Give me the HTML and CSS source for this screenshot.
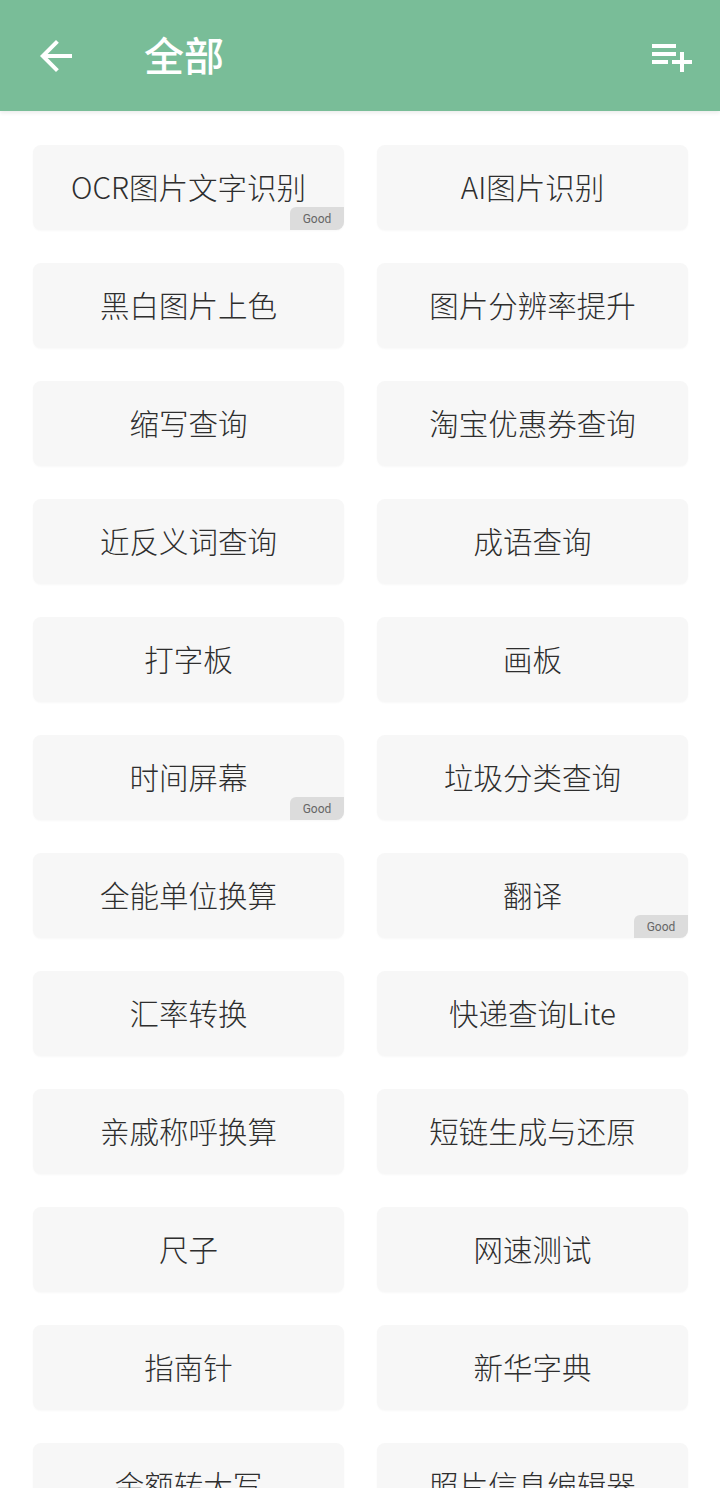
FILE: index.html
```html
<!DOCTYPE html>
<html lang="zh-CN">
<head>
    <meta charset="UTF-8">
    <title>全部</title>
    <link rel="stylesheet" href="styles.css">
</head>
<body>
    <div class="topbar">
        <svg class="back" viewBox="0 0 24 24"><path d="M20 11H7.83l5.59-5.59L12 4l-8 8 8 8 1.41-1.41L7.83 13H20v-2z"/></svg>
        <div class="title">全部</div>
        <svg class="addlist" viewBox="0 0 24 24"><path d="M14 10H2v2h12v-2zm0-4H2v2h12V6zm4 8v-4h-2v4h-4v2h4v4h2v-4h4v-2h-4zM2 16h8v-2H2v2z"/></svg>
    </div>

    <div class="grid">
        <div class="tool">OCR图片文字识别<span class="good">Good</span></div>
        <div class="tool">AI图片识别</div>
        <div class="tool">黑白图片上色</div>
        <div class="tool">图片分辨率提升</div>
        <div class="tool">缩写查询</div>
        <div class="tool">淘宝优惠券查询</div>
        <div class="tool">近反义词查询</div>
        <div class="tool">成语查询</div>
        <div class="tool">打字板</div>
        <div class="tool">画板</div>
        <div class="tool">时间屏幕<span class="good">Good</span></div>
        <div class="tool">垃圾分类查询</div>
        <div class="tool">全能单位换算</div>
        <div class="tool">翻译<span class="good">Good</span></div>
        <div class="tool">汇率转换</div>
        <div class="tool">快递查询Lite</div>
        <div class="tool">亲戚称呼换算</div>
        <div class="tool">短链生成与还原</div>
        <div class="tool">尺子</div>
        <div class="tool">网速测试</div>
        <div class="tool">指南针</div>
        <div class="tool">新华字典</div>
        <div class="tool">金额转大写</div>
        <div class="tool">照片信息编辑器</div>
    </div>
</body>
</html>
```

FILE: styles.css
```css
body {
    margin: 0;
    background: #fff;
    font-family: "Noto Sans CJK SC", "Noto Sans", sans-serif;
    overflow: hidden;
}

.topbar {
    height: 111px;
    background: #79bd98;
    display: flex;
    align-items: center;
    padding: 0 24px 0 32px;
    box-shadow: 0 2px 4px rgba(0, 0, 0, 0.08);
    position: relative;
}

.back {
    width: 48px;
    height: 48px;
    fill: #fff;
}

.title {
    color: #fff;
    font-size: 40px;
    font-weight: 500;
    margin-left: 64px;
    flex: 1;
    line-height: 1;
    margin-top: -4px;
}

.addlist {
    width: 48px;
    height: 48px;
    fill: #fff;
}

.grid {
    display: grid;
    grid-template-columns: 311px 311px;
    column-gap: 33px;
    row-gap: 33px;
    padding: 34px 33px;
}

.tool {
    position: relative;
    height: 85px;
    box-sizing: border-box;
    padding-bottom: 4px;
    background: #f7f7f7;
    border-radius: 8px;
    display: flex;
    align-items: center;
    justify-content: center;
    font-size: 29.5px;
    font-weight: 300;
    color: #2e2e2e;
    box-shadow: 0 1px 2px rgba(0, 0, 0, 0.03);
}

.good {
    position: absolute;
    right: 0;
    bottom: 0;
    width: 54px;
    height: 23px;
    background: #dcdcdc;
    border-radius: 6px 0 8px 0;
    font-family: "Roboto", sans-serif;
    font-size: 12px;
    font-weight: 400;
    color: #666;
    display: flex;
    align-items: center;
    justify-content: center;
}
```
